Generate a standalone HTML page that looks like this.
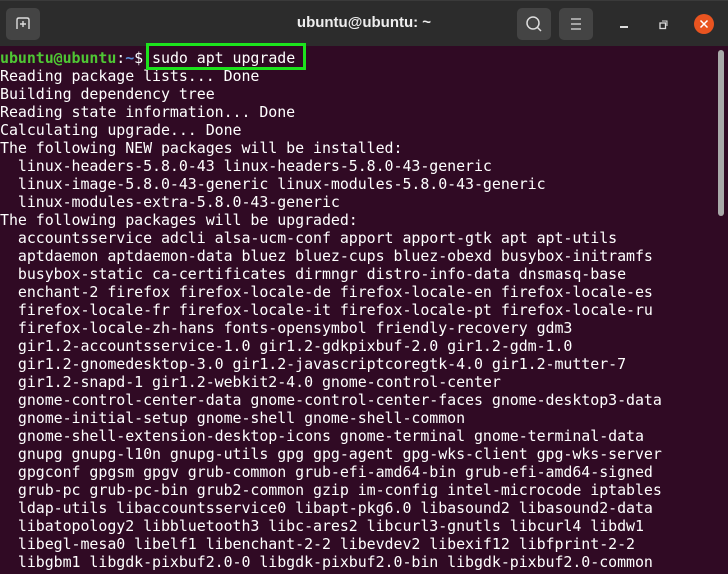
<!DOCTYPE html>
<html><head><style>
body{margin:0;width:728px;height:574px;overflow:hidden;background:#300a24;font-family:"DejaVu Sans Mono","Liberation Mono",monospace;}
#hdr{position:absolute;left:0;top:0;width:728px;height:46px;background:#2c2c2c;border-top:1px solid #3a3a3a;box-sizing:border-box}
.btn{position:absolute;top:7px;width:34px;height:32px;background:#444;border-radius:5px}
#title{position:absolute;left:0;width:728px;top:13px;text-align:center;color:#eee;font:bold 15px "Liberation Sans",sans-serif}
pre{position:absolute;left:0;top:49px;margin:0;font-size:14.95px;line-height:18px;color:#fff;font-family:"DejaVu Sans Mono",monospace;letter-spacing:-0.05px}
.g{color:#4fc634;font-weight:bold}.b{color:#5a8fd8;font-weight:bold}
#box{position:absolute;left:146px;top:43px;width:154px;height:21px;border:3px solid #1de21d}
#sb{position:absolute;left:718px;top:50px;width:6px;height:166px;background:#a9a9a9;border-radius:3px}
</style></head><body>
<div id="hdr">
<div class="btn" style="left:6px"><svg width="34" height="32"><path d="M11 21V12q0-2 2-2h8q2 0 2 2v9" fill="none" stroke="#ddd" stroke-width="1.4"/><path d="M17 13v6M14 16h6" stroke="#ddd" stroke-width="1.4"/></svg></div>
<div id="title">ubuntu@ubuntu: ~</div>
<div class="btn" style="left:517px"><svg width="34" height="32"><circle cx="16" cy="15" r="6" fill="none" stroke="#ddd" stroke-width="1.5"/><path d="M20 19l4 4" stroke="#ddd" stroke-width="1.5"/></svg></div>
<div class="btn" style="left:559px"><svg width="34" height="32"><path d="M12 11h10M12 16h10M12 21h10" stroke="#ddd" stroke-width="1.3"/></svg></div>
<div style="position:absolute;left:620px;top:25px;width:8px;height:1.5px;background:#ddd"></div>
<svg style="position:absolute;left:658px;top:18px" width="12" height="12"><rect x="2" y="4" width="5.5" height="5.5" fill="none" stroke="#ddd" stroke-width="1.3"/><path d="M4 2h5v5" fill="none" stroke="#ddd" stroke-width="1"/></svg>
<svg style="position:absolute;left:694px;top:13px" width="20" height="20"><circle cx="10" cy="10" r="10" fill="#e95420"/><path d="M6.5 6.5l7 7M13.5 6.5l-7 7" stroke="#fff" stroke-width="1.5"/></svg>
</div>
<pre><span class="g">ubuntu@ubuntu</span>:<span class="b">~</span>$ sudo apt upgrade
Reading package lists... Done
Building dependency tree
Reading state information... Done
Calculating upgrade... Done
The following NEW packages will be installed:
  linux-headers-5.8.0-43 linux-headers-5.8.0-43-generic
  linux-image-5.8.0-43-generic linux-modules-5.8.0-43-generic
  linux-modules-extra-5.8.0-43-generic
The following packages will be upgraded:
  accountsservice adcli alsa-ucm-conf apport apport-gtk apt apt-utils
  aptdaemon aptdaemon-data bluez bluez-cups bluez-obexd busybox-initramfs
  busybox-static ca-certificates dirmngr distro-info-data dnsmasq-base
  enchant-2 firefox firefox-locale-de firefox-locale-en firefox-locale-es
  firefox-locale-fr firefox-locale-it firefox-locale-pt firefox-locale-ru
  firefox-locale-zh-hans fonts-opensymbol friendly-recovery gdm3
  gir1.2-accountsservice-1.0 gir1.2-gdkpixbuf-2.0 gir1.2-gdm-1.0
  gir1.2-gnomedesktop-3.0 gir1.2-javascriptcoregtk-4.0 gir1.2-mutter-7
  gir1.2-snapd-1 gir1.2-webkit2-4.0 gnome-control-center
  gnome-control-center-data gnome-control-center-faces gnome-desktop3-data
  gnome-initial-setup gnome-shell gnome-shell-common
  gnome-shell-extension-desktop-icons gnome-terminal gnome-terminal-data
  gnupg gnupg-l10n gnupg-utils gpg gpg-agent gpg-wks-client gpg-wks-server
  gpgconf gpgsm gpgv grub-common grub-efi-amd64-bin grub-efi-amd64-signed
  grub-pc grub-pc-bin grub2-common gzip im-config intel-microcode iptables
  ldap-utils libaccountsservice0 libapt-pkg6.0 libasound2 libasound2-data
  libatopology2 libbluetooth3 libc-ares2 libcurl3-gnutls libcurl4 libdw1
  libegl-mesa0 libelf1 libenchant-2-2 libevdev2 libexif12 libfprint-2-2
  libgbm1 libgdk-pixbuf2.0-0 libgdk-pixbuf2.0-bin libgdk-pixbuf2.0-common</pre>
<div id="box"></div>
<div id="sb"></div>
</body></html>
